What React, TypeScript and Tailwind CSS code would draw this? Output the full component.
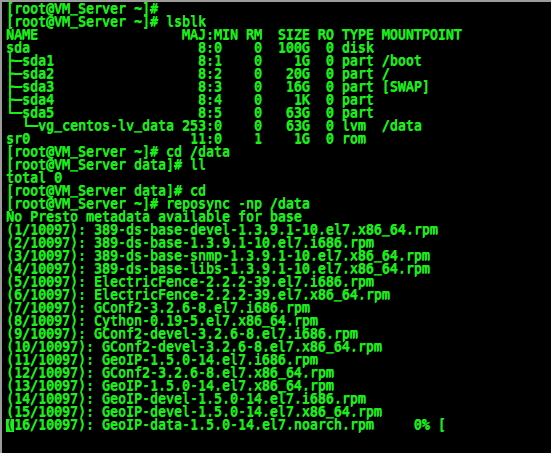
import React from 'react';

// lsblk columns: NAME(22) MAJ:MIN(7) RM(2) SIZE(5) RO(2) TYPE(4) MOUNTPOINT
const row = (name: string, mm: string, rm: string, size: string, ro: string, type: string, mp = '') =>
  name.padEnd(22) + mm.padEnd(7) + ' ' + rm.padStart(2) + ' ' + size.padStart(5) + ' ' + ro.padStart(2) + ' ' + type.padEnd(4) + ' ' + mp;

const lines: string[] = [
  '[root@VM_Server ~]#',
  '[root@VM_Server ~]# lsblk',
  row('NAME', 'MAJ:MIN', 'RM', 'SIZE', 'RO', 'TYPE', 'MOUNTPOINT'),
  row('sda', '  8:0', '0', '100G', '0', 'disk'),
  row('├─sda1', '  8:1', '0', '1G', '0', 'part', '/boot'),
  row('├─sda2', '  8:2', '0', '20G', '0', 'part', '/'),
  row('├─sda3', '  8:3', '0', '16G', '0', 'part', '[SWAP]'),
  row('├─sda4', '  8:4', '0', '1K', '0', 'part'),
  row('└─sda5', '  8:5', '0', '63G', '0', 'part'),
  row('  └─vg_centos-lv_data', '253:0', '0', '63G', '0', 'lvm', '/data'),
  row('sr0', ' 11:0', '1', '1G', '0', 'rom'),
  '[root@VM_Server ~]# cd /data',
  '[root@VM_Server data]# ll',
  'total 0',
  '[root@VM_Server data]# cd',
  '[root@VM_Server ~]# reposync -np /data',
  'No Presto metadata available for base',
  '(1/10097): 389-ds-base-devel-1.3.9.1-10.el7.x86_64.rpm',
  '(2/10097): 389-ds-base-1.3.9.1-10.el7.i686.rpm',
  '(3/10097): 389-ds-base-snmp-1.3.9.1-10.el7.x86_64.rpm',
  '(4/10097): 389-ds-base-libs-1.3.9.1-10.el7.x86_64.rpm',
  '(5/10097): ElectricFence-2.2.2-39.el7.i686.rpm',
  '(6/10097): ElectricFence-2.2.2-39.el7.x86_64.rpm',
  '(7/10097): GConf2-3.2.6-8.el7.i686.rpm',
  '(8/10097): Cython-0.19-5.el7.x86_64.rpm',
  '(9/10097): GConf2-devel-3.2.6-8.el7.i686.rpm',
  '(10/10097): GConf2-devel-3.2.6-8.el7.x86_64.rpm',
  '(11/10097): GeoIP-1.5.0-14.el7.i686.rpm',
  '(12/10097): GConf2-3.2.6-8.el7.x86_64.rpm',
  '(13/10097): GeoIP-1.5.0-14.el7.x86_64.rpm',
  '(14/10097): GeoIP-devel-1.5.0-14.el7.i686.rpm',
  '(15/10097): GeoIP-devel-1.5.0-14.el7.x86_64.rpm',
];

const last = '16/10097): GeoIP-data-1.5.0-14.el7.noarch.rpm     0% [';

// the terminal font sits its underscore right on the baseline
function Line({ text }: { text: string }) {
  const parts = text.split('_');
  return (
    <>
      {parts.map((p, i) => (
        <React.Fragment key={i}>
          {i > 0 && <span className="relative -top-[2px]">_</span>}
          {p}
        </React.Fragment>
      ))}
    </>
  );
}

export default function App() {
  return (
    <div className="w-[551px] h-[453px] overflow-hidden bg-black border-t-2 border-l-2 border-[#9c9c9c]">
      <div className="pl-1 pt-[1px] text-[#18f018] text-[13.29px] leading-[12px] whitespace-pre font-['DejaVu_Sans_Mono',monospace] [text-shadow:0.4px_0_0_#18f018,0_0.5px_0_#18f018]">
        {lines.map((l, i) => (
          <div key={i} className="h-[13px]">
            <Line text={l} />
          </div>
        ))}
        <div className="h-[13px]">
          <span className="inline-block h-[13px] bg-[#18f018] text-black [text-shadow:none]">(</span>
          <Line text={last} />
        </div>
      </div>
    </div>
  );
}
